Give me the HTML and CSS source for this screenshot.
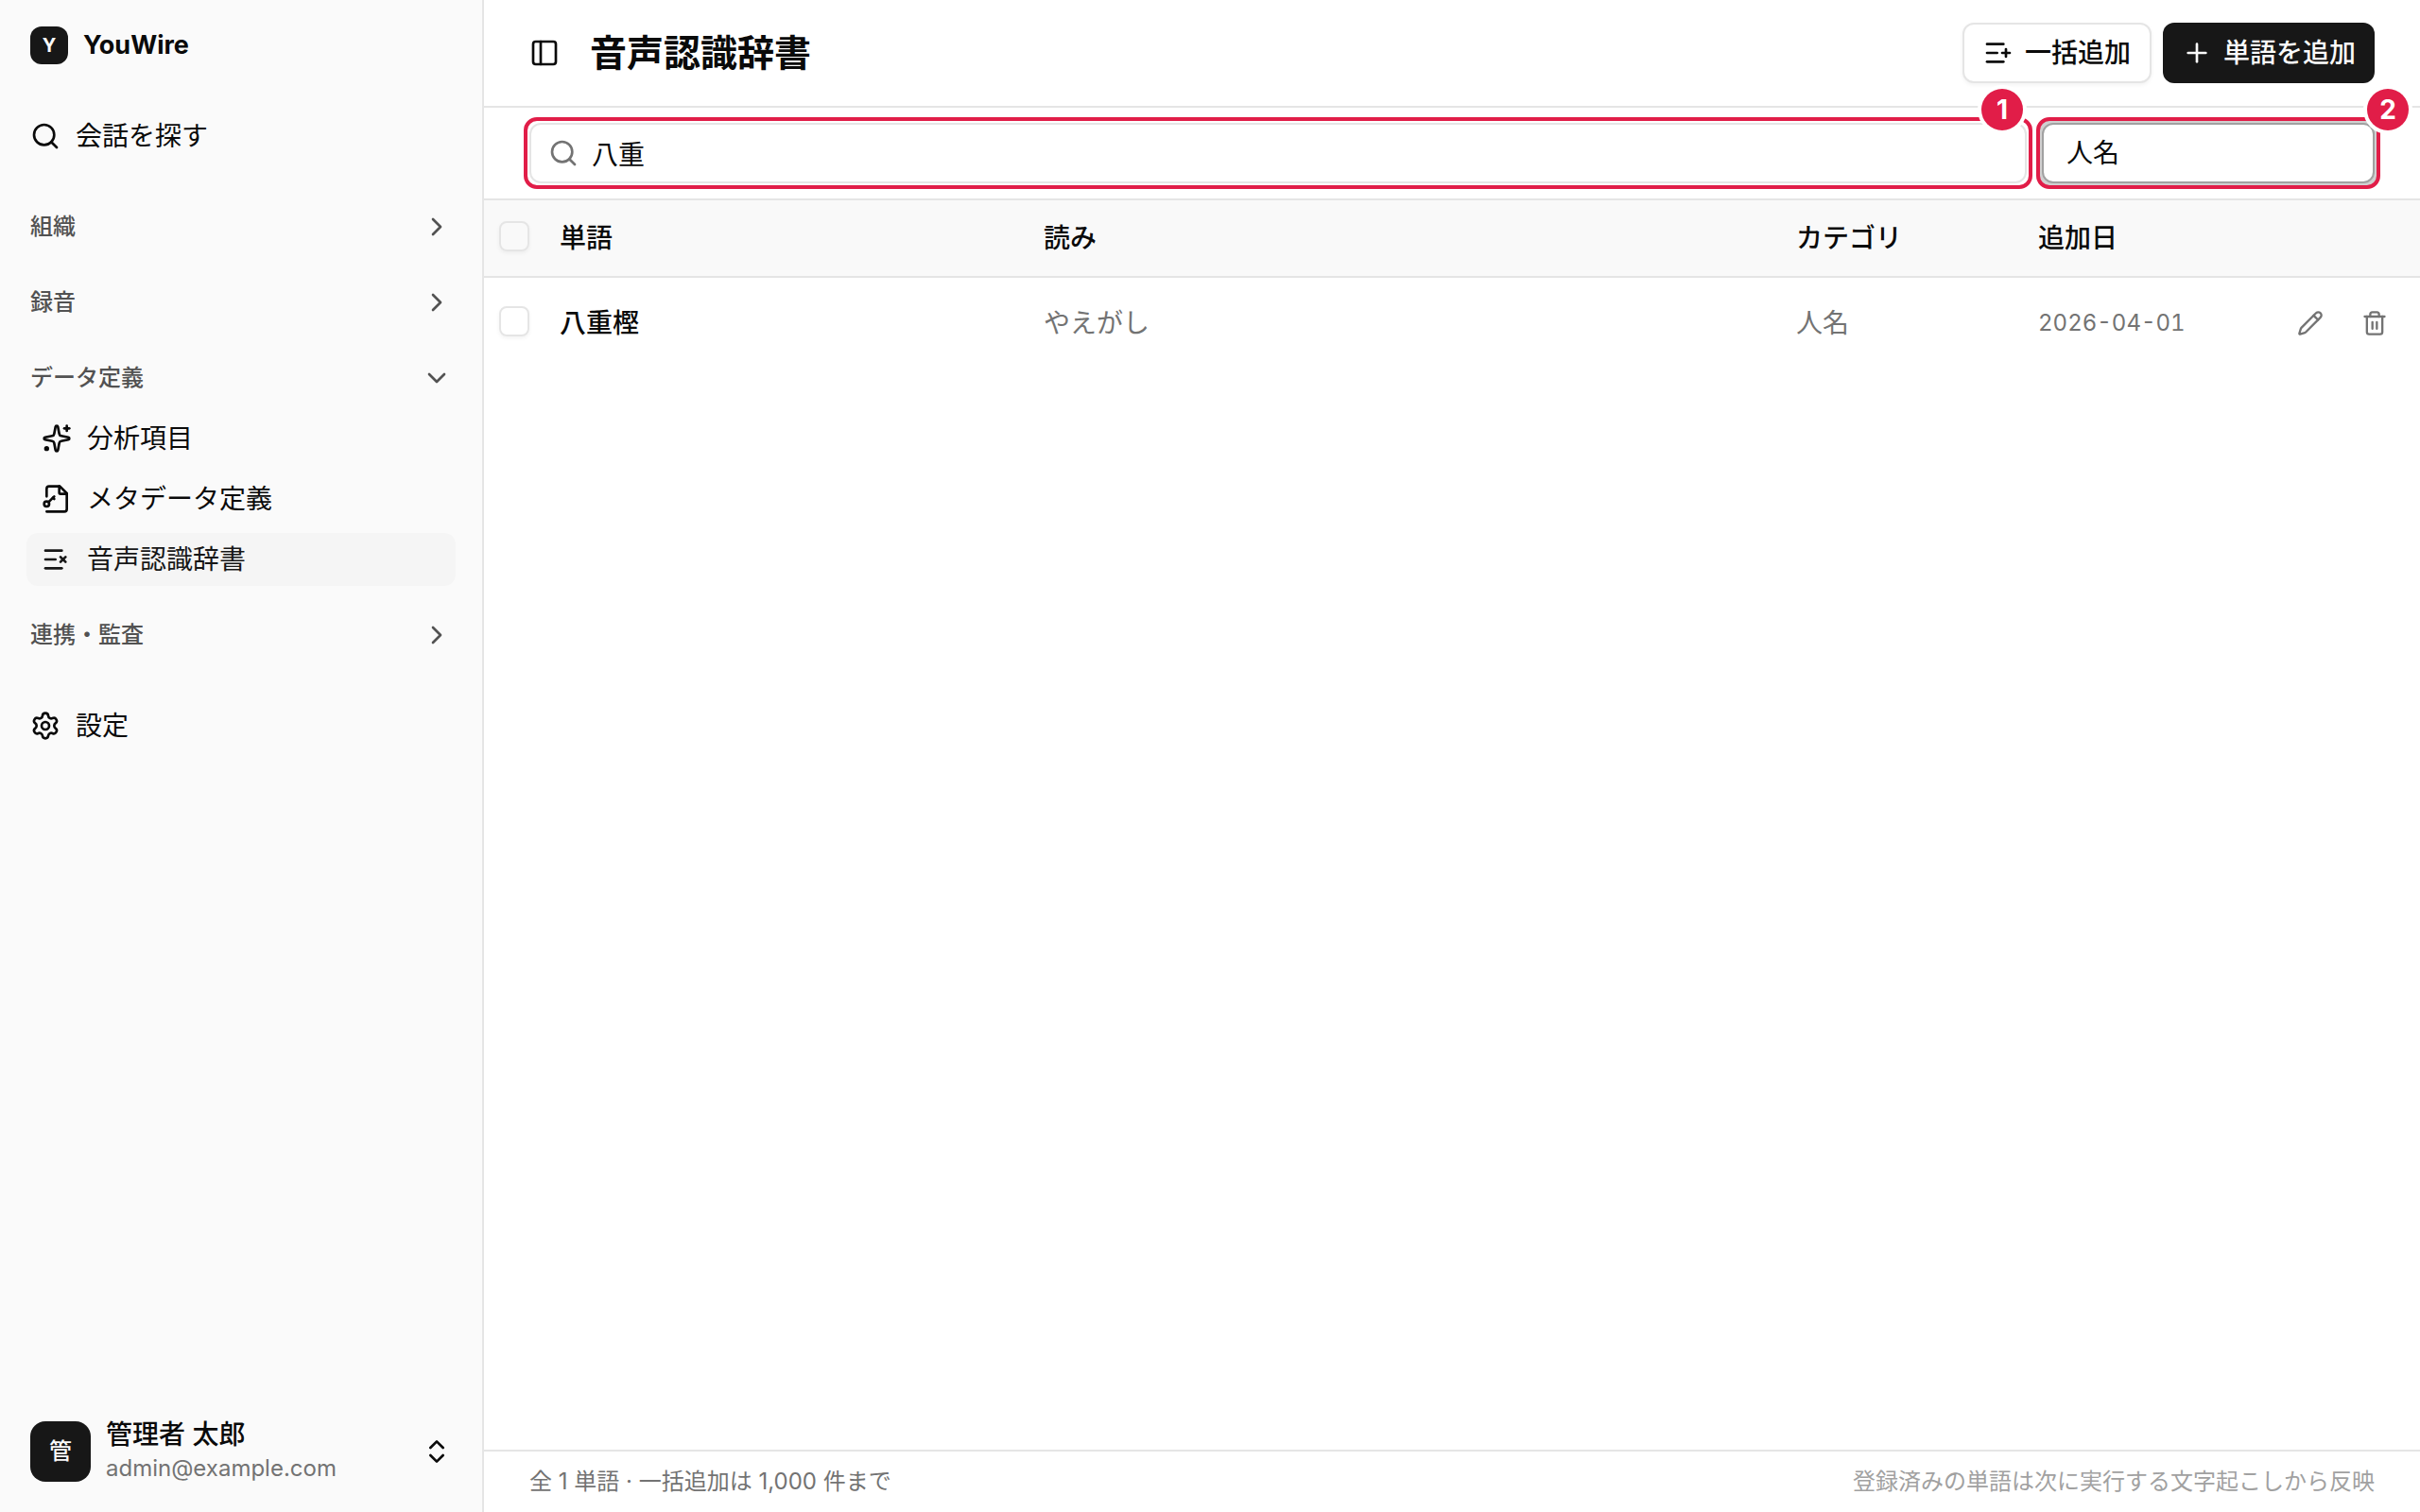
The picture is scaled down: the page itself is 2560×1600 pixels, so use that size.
FILE: index.html
```html
<!DOCTYPE html>
<html lang="ja">
<head>
    <meta charset="UTF-8">
    <meta name="viewport" content="width=device-width, initial-scale=1.0">
    <title>音声認識辞書 | YouWire</title>
    <link rel="stylesheet" href="styles.css">
</head>
<body>
    <div class="layout">
        <aside class="sidebar">
            <div class="brand">
                <span class="brand-mark">Y</span>
                <span class="brand-name">YouWire</span>
            </div>

            <nav class="nav">
                <a href="#" class="nav-link">
                    <svg class="icon" viewBox="0 0 24 24"><path d="m21 21-4.34-4.34"/><circle cx="11" cy="11" r="8"/></svg>
                    会話を探す
                </a>

                <button type="button" class="nav-group first">
                    組織
                    <svg class="icon" viewBox="0 0 24 24"><path d="m9 18 6-6-6-6"/></svg>
                </button>
                <button type="button" class="nav-group">
                    録音
                    <svg class="icon" viewBox="0 0 24 24"><path d="m9 18 6-6-6-6"/></svg>
                </button>
                <button type="button" class="nav-group" aria-expanded="true">
                    データ定義
                    <svg class="icon" viewBox="0 0 24 24"><path d="m6 9 6 6 6-6"/></svg>
                </button>
                <ul class="nav-sub">
                    <li>
                        <a href="#" class="nav-sub-link">
                            <svg class="icon" viewBox="0 0 24 24"><path d="M11.017 2.814a1 1 0 0 1 1.966 0l1.051 5.558a2 2 0 0 0 1.594 1.594l5.558 1.051a1 1 0 0 1 0 1.966l-5.558 1.051a2 2 0 0 0-1.594 1.594l-1.051 5.558a1 1 0 0 1-1.966 0l-1.051-5.558a2 2 0 0 0-1.594-1.594l-5.558-1.051a1 1 0 0 1 0-1.966l5.558-1.051a2 2 0 0 0 1.594-1.594z"/><path d="M20 2v4"/><path d="M22 4h-4"/><circle cx="4" cy="20" r="1"/></svg>
                            分析項目
                        </a>
                    </li>
                    <li>
                        <a href="#" class="nav-sub-link">
                            <svg class="icon" viewBox="0 0 24 24"><path d="M4 10V4a2 2 0 0 1 2-2h8.500L20 7.500V20a2 2 0 0 1-2 2H4"/><path d="M14 2v5a1 1 0 0 0 1 1h5"/><path d="m10 10-4.500 4.500"/><path d="m9 11 1 1"/><circle cx="4" cy="16" r="2"/></svg>
                            メタデータ定義
                        </a>
                    </li>
                    <li>
                        <a href="#" class="nav-sub-link active" aria-current="page">
                            <svg class="icon" viewBox="0 0 24 24"><path d="M16 5H3"/><path d="M11 12H3"/><path d="M16 19H3"/><path d="m15 10 4 4"/><path d="m19 10-4 4"/></svg>
                            音声認識辞書
                        </a>
                    </li>
                </ul>
                <button type="button" class="nav-group">
                    連携・監査
                    <svg class="icon" viewBox="0 0 24 24"><path d="m9 18 6-6-6-6"/></svg>
                </button>

                <a href="#" class="nav-link settings">
                    <svg class="icon" viewBox="0 0 24 24"><path d="M9.671 4.136a2.340 2.340 0 0 1 4.659 0 2.340 2.340 0 0 0 3.319 1.915 2.340 2.340 0 0 1 2.330 4.033 2.340 2.340 0 0 0 0 3.831 2.340 2.340 0 0 1-2.330 4.033 2.340 2.340 0 0 0-3.319 1.915 2.340 2.340 0 0 1-4.659 0 2.340 2.340 0 0 0-3.320-1.915 2.340 2.340 0 0 1-2.330-4.033 2.340 2.340 0 0 0 0-3.831A2.340 2.340 0 0 1 6.350 6.051a2.340 2.340 0 0 0 3.319-1.915"/><circle cx="12" cy="12" r="3"/></svg>
                    設定
                </a>
            </nav>

            <button type="button" class="user">
                <span class="avatar">管</span>
                <span class="user-info">
                    <span class="user-name">管理者 太郎</span>
                    <span class="user-mail">admin@example.com</span>
                </span>
                <svg class="icon" viewBox="0 0 24 24"><path d="m7 15 5 5 5-5"/><path d="m7 9 5-5 5 5"/></svg>
            </button>
        </aside>

        <main class="main">
            <header class="header">
                <button type="button" class="icon-btn" aria-label="サイドバーを切り替え">
                    <svg class="icon" viewBox="0 0 24 24"><rect width="18" height="18" x="3" y="3" rx="2"/><path d="M9 3v18"/></svg>
                </button>
                <h1>音声認識辞書</h1>
                <div class="actions">
                    <button type="button" class="btn btn-outline">
                        <svg class="icon" viewBox="0 0 24 24"><path d="M16 5H3"/><path d="M11 12H3"/><path d="M16 19H3"/><path d="M18 9v6"/><path d="M21 12h-6"/></svg>
                        一括追加
                    </button>
                    <button type="button" class="btn btn-primary">
                        <svg class="icon" viewBox="0 0 24 24"><path d="M5 12h14"/><path d="M12 5v14"/></svg>
                        単語を追加
                    </button>
                </div>
            </header>

            <div class="filters">
                <div class="marked search">
                    <svg class="icon" viewBox="0 0 24 24"><path d="m21 21-4.340-4.340"/><circle cx="11" cy="11" r="8"/></svg>
                    <input type="text" class="field" value="八重" aria-label="単語を検索">
                    <span class="marker">1</span>
                </div>
                <div class="marked category">
                    <select class="field focused" aria-label="カテゴリ">
                        <option>人名</option>
                    </select>
                    <span class="marker">2</span>
                </div>
            </div>

            <div class="table-wrap">
                <table class="words">
                    <colgroup>
                        <col class="col-check">
                        <col class="col-word">
                        <col class="col-reading">
                        <col class="col-category">
                        <col class="col-date">
                        <col class="col-action">
                    </colgroup>
                    <thead>
                        <tr>
                            <th><input type="checkbox" class="check" aria-label="すべて選択"></th>
                            <th>単語</th>
                            <th>読み</th>
                            <th>カテゴリ</th>
                            <th>追加日</th>
                            <th></th>
                        </tr>
                    </thead>
                    <tbody>
                        <tr>
                            <td><input type="checkbox" class="check" aria-label="八重樫を選択"></td>
                            <td class="word">八重樫</td>
                            <td>やえがし</td>
                            <td>人名</td>
                            <td class="date">2026-04-01</td>
                            <td>
                                <div class="row-actions">
                                    <button type="button" class="icon-btn" aria-label="編集">
                                        <svg class="icon" viewBox="0 0 24 24"><path d="M21.174 6.812a1 1 0 0 0-3.986-3.987L3.842 16.174a2 2 0 0 0-.500.830l-1.321 4.352a.500.500 0 0 0 .623.622l4.353-1.320a2 2 0 0 0 .830-.497z"/><path d="m15 5 4 4"/></svg>
                                    </button>
                                    <button type="button" class="icon-btn" aria-label="削除">
                                        <svg class="icon" viewBox="0 0 24 24"><path d="M10 11v6"/><path d="M14 11v6"/><path d="M19 6v14a2 2 0 0 1-2 2H7a2 2 0 0 1-2-2V6"/><path d="M3 6h18"/><path d="M8 6V4a2 2 0 0 1 2-2h4a2 2 0 0 1 2 2v2"/></svg>
                                    </button>
                                </div>
                            </td>
                        </tr>
                    </tbody>
                </table>
            </div>

            <footer class="footer">
                <span>全 1 単語 · 一括追加は 1,000 件まで</span>
                <span class="note">登録済みの単語は次に実行する文字起こしから反映</span>
            </footer>
        </main>
    </div>
</body>
</html>
```

FILE: styles.css
```css
* {
    box-sizing: border-box;
}
body {
    margin: 0;
    font-family: Inter, "Noto Sans CJK JP", sans-serif;
    font-size: 28px;
    line-height: 40px;
    color: #0a0a0a;
    background: #fff;
}
button, input, select {
    font: inherit;
    color: inherit;
}
button {
    padding: 0;
    border: none;
    background: none;
    cursor: pointer;
}
a {
    color: inherit;
    text-decoration: none;
}
.icon {
    width: 32px;
    height: 32px;
    flex-shrink: 0;
    fill: none;
    stroke: currentColor;
    stroke-width: 2;
    stroke-linecap: round;
    stroke-linejoin: round;
}
.layout {
    display: flex;
    min-height: 100vh;
}

/* sidebar */
.sidebar {
    display: flex;
    flex-direction: column;
    width: 512px;
    flex-shrink: 0;
    border-right: 2px solid #e5e5e5;
    background: #fafafa;
}
.brand {
    display: flex;
    align-items: center;
    gap: 16px;
    height: 96px;
    padding: 0 32px;
}
.brand-mark {
    display: flex;
    align-items: center;
    justify-content: center;
    width: 40px;
    height: 40px;
    border-radius: 12px;
    background: #171717;
    color: #fafafa;
    font-size: 20px;
    font-weight: 700;
}
.brand-name {
    font-size: 27px;
    font-weight: 700;
}
.nav {
    flex: 1;
    padding: 16px 28px;
}
.nav-link {
    display: flex;
    align-items: center;
    gap: 16px;
    height: 64px;
    padding: 0 4px;
}
.nav-group {
    display: flex;
    align-items: center;
    justify-content: space-between;
    width: 100%;
    height: 64px;
    margin-top: 16px;
    padding: 0 4px;
    font-size: 24px;
    font-weight: 500;
    color: #525252;
}
.nav-group.first {
    margin-top: 32px;
}
.nav-sub {
    margin: 0;
    padding: 4px 0;
    list-style: none;
}
.nav-sub li + li {
    margin-top: 8px;
}
.nav-sub-link {
    display: flex;
    align-items: center;
    gap: 16px;
    height: 56px;
    padding: 0 16px;
    border-radius: 12px;
}
.nav-sub-link.active {
    background: #f5f5f5;
    color: #171717;
}
.settings {
    margin-top: 32px;
}
.user {
    display: flex;
    align-items: center;
    gap: 16px;
    padding: 28px 32px;
    text-align: left;
}
.avatar {
    display: flex;
    align-items: center;
    justify-content: center;
    width: 64px;
    height: 64px;
    border-radius: 16px;
    background: #171717;
    color: #fafafa;
    font-size: 24px;
    font-weight: 500;
}
.user-info {
    flex: 1;
}
.user-name, .user-mail {
    display: block;
    line-height: 36px;
}
.user-name {
    font-weight: 500;
}
.user-mail {
    font-size: 24px;
    color: #737373;
}

/* header */
.main {
    display: flex;
    flex-direction: column;
    flex: 1;
    min-width: 0;
}
.header {
    display: flex;
    align-items: center;
    gap: 16px;
    height: 114px;
    padding: 0 48px 0 32px;
    border-bottom: 2px solid #e5e5e5;
}
.icon-btn {
    display: flex;
    align-items: center;
    justify-content: center;
    width: 64px;
    height: 64px;
}
h1 {
    margin: 0;
    font-size: 39px;
    line-height: 56px;
    font-weight: 600;
}
.actions {
    display: flex;
    gap: 12px;
    margin-left: auto;
}
.btn {
    display: flex;
    align-items: center;
    gap: 12px;
    height: 64px;
    padding: 0 20px;
    border-radius: 12px;
    font-weight: 500;
}
.btn-outline {
    border: 2px solid #e5e5e5;
    background: #fff;
    box-shadow: 0 2px 4px rgba(0, 0, 0, 0.05);
}
.btn-primary {
    background: #171717;
    color: #fafafa;
}

/* filters */
.filters {
    display: flex;
    gap: 16px;
    padding: 16px 48px;
    border-bottom: 2px solid #e5e5e5;
}
.marked {
    position: relative;
    border-radius: 8px;
    outline: 4px solid #e11d48;
    outline-offset: 2px;
}
.marker {
    position: absolute;
    top: -36px;
    right: 4px;
    width: 44px;
    height: 44px;
    border-radius: 50%;
    background: #e11d48;
    box-shadow: 0 0 0 4px #fff;
    color: #fff;
    font-size: 28px;
    line-height: 44px;
    font-weight: 700;
    text-align: center;
}
.search {
    flex: 1;
}
.search .icon {
    position: absolute;
    top: 16px;
    left: 20px;
    color: #737373;
}
.field {
    display: block;
    width: 100%;
    height: 64px;
    border: 2px solid #e5e5e5;
    border-radius: 12px;
    outline: none;
    background: #fff;
}
.search .field {
    padding: 0 20px 0 64px;
}
.category {
    width: 352px;
}
.category .field {
    padding: 0 24px;
    appearance: none;
}
.category .marker {
    right: -36px;
}
.field.focused {
    border-color: #a1a1a1;
    box-shadow: 0 0 0 4px #d0d0d0;
}

/* table */
.table-wrap {
    flex: 1;
}
.words {
    width: 100%;
    table-layout: fixed;
    border-collapse: separate;
    border-spacing: 0;
}
.col-check {
    width: 64px;
}
.col-word {
    width: 25%;
}
.col-category {
    width: 256px;
}
.col-date {
    width: 256px;
}
.col-action {
    width: 164px;
}
.words th, .words td {
    padding: 0 16px;
    text-align: left;
    vertical-align: middle;
}
.words th {
    height: 82px;
    border-bottom: 2px solid #e5e5e5;
    background: #f9f9f9;
    font-weight: 500;
}
.words td {
    height: 96px;
    color: #737373;
}
.words .word {
    font-weight: 500;
    color: #0a0a0a;
}
.words .date {
    font-size: 24px;
    font-variant-numeric: tabular-nums;
}
.check {
    display: block;
    width: 32px;
    height: 32px;
    margin: 0 0 4px;
    border: 2px solid #e5e5e5;
    border-radius: 8px;
    appearance: none;
    box-shadow: 0 2px 4px rgba(0, 0, 0, 0.05);
}
.row-actions {
    display: flex;
    gap: 4px;
}
.row-actions .icon {
    width: 28px;
    height: 28px;
}

/* footer */
.footer {
    display: flex;
    align-items: center;
    justify-content: space-between;
    height: 66px;
    padding: 0 48px;
    border-top: 2px solid #e5e5e5;
    font-size: 24px;
    color: #737373;
}
.note {
    color: #a1a1a1;
}
```
